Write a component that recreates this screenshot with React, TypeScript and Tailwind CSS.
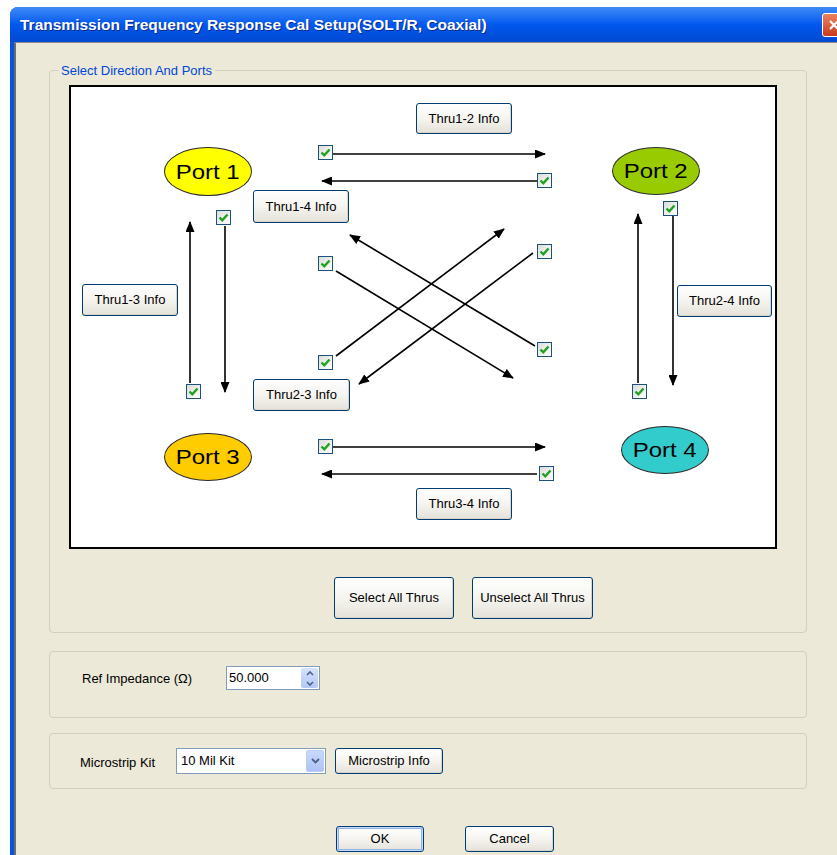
import React from 'react';

// inner origin of the white diagram canvas (page coords, inside its 2px border)
const X0 = 71;
const Y0 = 87;

type Port = { label: string; x: number; y: number; w: number; h: number; fill: string };
type Info = { label: string; x: number; y: number; w: number; h: number };
type Line = { x1: number; y1: number; x2: number; y2: number };

const ports: Port[] = [
  { label: 'Port 1', x: 164, y: 147, w: 88, h: 49, fill: 'bg-[#ffff00]' },
  { label: 'Port 2', x: 612, y: 147, w: 88, h: 48, fill: 'bg-[#99cc00]' },
  { label: 'Port 3', x: 164, y: 433, w: 88, h: 48, fill: 'bg-[#ffcc00]' },
  { label: 'Port 4', x: 621, y: 426, w: 88, h: 48, fill: 'bg-[#33cccc]' },
];

const infoButtons: Info[] = [
  { label: 'Thru1-2 Info', x: 416, y: 103, w: 96, h: 31 },
  { label: 'Thru1-4 Info', x: 253, y: 190, w: 96, h: 33 },
  { label: 'Thru1-3 Info', x: 82, y: 284, w: 96, h: 32 },
  { label: 'Thru2-4 Info', x: 677, y: 285, w: 95, h: 32 },
  { label: 'Thru2-3 Info', x: 253, y: 379, w: 97, h: 32 },
  { label: 'Thru3-4 Info', x: 416, y: 488, w: 96, h: 32 },
];

// checkbox centres
const checks: [number, number][] = [
  [325, 152], [544, 180], [223, 217], [670, 208],
  [325, 263], [544, 251], [325, 362], [544, 349],
  [193, 391], [639, 391], [325, 446], [546, 473],
];

// every line ends in an arrow head at (x2, y2)
const arrows: Line[] = [
  { x1: 333, y1: 154, x2: 545, y2: 154 },
  { x1: 537, y1: 181, x2: 322, y2: 181 },
  { x1: 190, y1: 383, x2: 190, y2: 222 },
  { x1: 225, y1: 226, x2: 225, y2: 392 },
  { x1: 638, y1: 383, x2: 638, y2: 214 },
  { x1: 673, y1: 216, x2: 673, y2: 385 },
  { x1: 336, y1: 271, x2: 513, y2: 378 },
  { x1: 533, y1: 253, x2: 359, y2: 384 },
  { x1: 535, y1: 346, x2: 350, y2: 235 },
  { x1: 336, y1: 356, x2: 504, y2: 229 },
  { x1: 333, y1: 447, x2: 545, y2: 447 },
  { x1: 537, y1: 474, x2: 322, y2: 474 },
];

const btn =
  'flex items-center justify-center rounded-[3px] border border-[#003c74] bg-linear-to-b from-white via-[#f5f4ef] to-[#e4e2d9] text-[13px] text-black shadow-[inset_-1px_-1px_0_#d8d4c8]';

const XpButton: React.FC<{ className?: string; children: React.ReactNode }> = ({ className, children }) => (
  <button type="button" className={`${btn} ${className ?? ''}`}>
    {children}
  </button>
);

const CheckBox: React.FC<{ cx: number; cy: number }> = ({ cx, cy }) => (
  <div
    className="absolute flex h-[15px] w-[15px] items-center justify-center border border-[#1c5180] bg-linear-to-br from-[#dcdcd7] to-white"
    style={{ left: cx - 7.5 - X0, top: cy - 7.5 - Y0 }}
  >
    <svg width="11" height="11" viewBox="0 0 11 11">
      <path d="M1.5 5.5 L4.3 8.3 L9.5 2.5" fill="none" stroke="#21a121" strokeWidth="2.4" />
    </svg>
  </div>
);

const Diagram: React.FC = () => (
  <div className="relative h-[464px] w-[708px] border-2 border-black bg-white">
    <svg className="absolute left-0 top-0" width="704" height="460" viewBox={`${X0} ${Y0} 704 460`}>
      <defs>
        <marker id="head" markerUnits="userSpaceOnUse" markerWidth="11" markerHeight="9" refX="10" refY="4.5" orient="auto">
          <path d="M0 0 L11 4.5 L0 9 Z" fill="#000" />
        </marker>
      </defs>
      {arrows.map((a, i) => (
        <line key={i} x1={a.x1} y1={a.y1} x2={a.x2} y2={a.y2} stroke="#000" strokeWidth="1.6" markerEnd="url(#head)" />
      ))}
    </svg>

    {ports.map((p) => (
      <div
        key={p.label}
        className={`absolute flex items-center justify-center rounded-[50%] border border-[#2a2a2a] ${p.fill}`}
        style={{ left: p.x - X0, top: p.y - Y0, width: p.w, height: p.h }}
      >
        <span className="scale-x-[1.2] text-[20px] leading-none text-black">{p.label}</span>
      </div>
    ))}

    {infoButtons.map((b) => (
      <button
        key={b.label}
        type="button"
        className={`absolute ${btn}`}
        style={{ left: b.x - X0, top: b.y - Y0, width: b.w, height: b.h }}
      >
        {b.label}
      </button>
    ))}

    {checks.map(([cx, cy], i) => (
      <CheckBox key={i} cx={cx} cy={cy} />
    ))}
  </div>
);

const Spinner: React.FC = () => (
  <div className="flex h-[24px] w-[94px] items-center border border-[#7f9db9] bg-white">
    <span className="flex-1 pl-[2px] text-[13px]">50.000</span>
    <div className="mr-[1px] flex h-[20px] w-[17px] flex-col rounded-[2px] bg-linear-to-b from-[#d6e2fd] to-[#b4c8f6]">
      <div className="flex flex-1 items-center justify-center">
        <svg width="8" height="5" viewBox="0 0 8 5">
          <path d="M1 4 L4 1 L7 4" fill="none" stroke="#4d6185" strokeWidth="1.6" />
        </svg>
      </div>
      <div className="flex flex-1 items-center justify-center">
        <svg width="8" height="5" viewBox="0 0 8 5">
          <path d="M1 1 L4 4 L7 1" fill="none" stroke="#4d6185" strokeWidth="1.6" />
        </svg>
      </div>
    </div>
  </div>
);

const Combo: React.FC = () => (
  <div className="flex h-[26px] w-[150px] items-center border border-[#7f9db9] bg-white">
    <span className="flex-1 pl-[4px] text-[13px]">10 Mil Kit</span>
    <div className="mr-[1px] flex h-[22px] w-[18px] items-center justify-center rounded-[2px] border border-[#bccdf5] bg-linear-to-b from-[#c9d8fc] to-[#adc3f5]">
      <svg width="9" height="6" viewBox="0 0 9 6">
        <path d="M1 1 L4.5 4.5 L8 1" fill="none" stroke="#4d6185" strokeWidth="1.8" />
      </svg>
    </div>
  </div>
);

export default function App() {
  return (
    <div className="h-[855px] w-[837px] overflow-hidden bg-white pl-[10px] pt-[7px] font-['Liberation_Sans',Arial,sans-serif] text-[13px] text-black">
      <div className="flex h-[900px] w-[842px] flex-col rounded-t-[8px] bg-[#0553e0]">
        {/* title bar */}
        <div className="flex h-[35px] items-center rounded-t-[8px] bg-linear-to-b from-[#3d8af7] via-[#0058ee] to-[#0349d2]">
          <span className="pl-[10px] pt-[1px] text-[15.5px] font-bold text-white [text-shadow:1px_1px_0_#0b2a8c]">
            Transmission Frequency Response Cal Setup(SOLT/R, Coaxial)
          </span>
          <div className="ml-auto mr-[6px] flex h-[24px] w-[24px] items-center justify-center rounded-[3px] border border-white bg-linear-to-b from-[#e9825f] to-[#c8391b]">
            <svg width="12" height="12" viewBox="0 0 12 12">
              <path d="M2 2 L10 10 M10 2 L2 10" stroke="#fff" strokeWidth="2.2" />
            </svg>
          </div>
        </div>

        {/* client area */}
        <div className="ml-[4px] flex-1 border-l-2 border-t border-l-[#6c6c6c] border-t-[#8c8c8c] bg-[#ece9d8] pl-[33px] pt-[20px]">
          <fieldset className="w-[758px] rounded-[4px] border border-[#d0d0bf] p-0">
            <legend className="ml-[8px] px-[3px] text-[13px] leading-[15px] text-[#0046d5]">Select Direction And Ports</legend>
            <div className="pb-[13px] pl-[19px] pt-[7px]">
              <Diagram />
              <div className="ml-[265px] mt-[28px] flex gap-[18px]">
                <XpButton className="h-[42px] w-[120px]">Select All Thrus</XpButton>
                <XpButton className="h-[42px] w-[121px]">Unselect All Thrus</XpButton>
              </div>
            </div>
          </fieldset>

          <div className="mt-[18px] flex h-[67px] w-[758px] items-start rounded-[4px] border border-[#d0d0bf] pl-[32px] pt-[14px]">
            <span className="w-[144px] pt-[3px]">Ref Impedance (Ω)</span>
            <Spinner />
          </div>

          <div className="mt-[15px] flex h-[56px] w-[758px] items-start rounded-[4px] border border-[#d0d0bf] pl-[30px] pt-[14px]">
            <span className="w-[96px] pt-[5px]">Microstrip Kit</span>
            <Combo />
            <XpButton className="ml-[9px] h-[26px] w-[108px]">Microstrip Info</XpButton>
          </div>

          <div className="ml-[287px] mt-[37px] flex gap-[41px]">
            <XpButton className="h-[26px] w-[88px] shadow-[inset_0_0_0_1px_#c6dafa,inset_0_0_0_2px_#8fb2e8]">OK</XpButton>
            <XpButton className="h-[26px] w-[89px]">Cancel</XpButton>
          </div>
        </div>
      </div>
    </div>
  );
}
